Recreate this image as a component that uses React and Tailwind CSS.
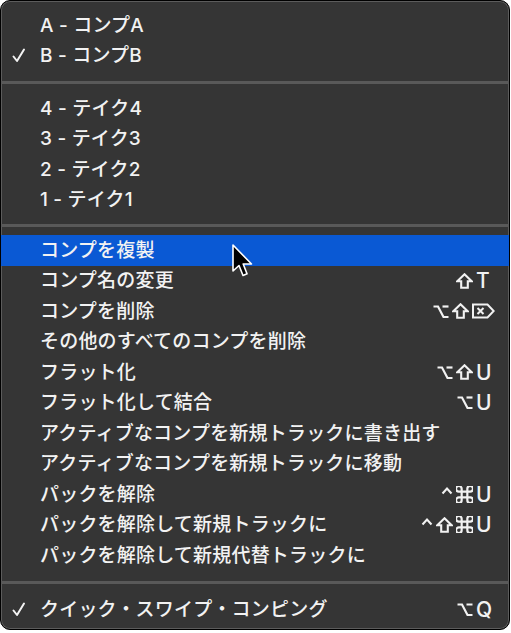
import React from 'react'

const font = { fontFamily: '"Inter", "Noto Sans CJK JP", sans-serif' }

function OptKey() {
  return (
    <svg width="16" height="15" viewBox="0 0 16 15" fill="none" stroke="currentColor" strokeWidth="2.2" strokeLinecap="butt">
      <path d="M0.5 2.5 H5 L10.5 13 H15.5" />
      <path d="M9.5 2.5 H15.5" />
    </svg>
  )
}

function ShiftKey() {
  return (
    <svg width="17" height="16" viewBox="0 0 17 16" fill="none" stroke="currentColor" strokeWidth="2.1" strokeLinejoin="miter">
      <path d="M8.5 1.3 L15.7 8.3 H11.8 V14.7 H5.2 V8.3 H1.3 Z" />
    </svg>
  )
}

function CmdKey() {
  return (
    <svg width="17" height="17" viewBox="3 3 18 18" fill="none" stroke="currentColor" strokeWidth="2.3">
      <path d="M15 6v12a3 3 0 1 0 3-3H6a3 3 0 1 0 3 3V6a3 3 0 1 0-3 3h12a3 3 0 1 0-3-3" />
    </svg>
  )
}

function CtrlKey() {
  return (
    <svg width="12" height="16" viewBox="0 0 12 16" fill="none" stroke="currentColor" strokeWidth="2.1">
      <path d="M1.5 7.5 L6 2.5 L10.5 7.5" />
    </svg>
  )
}

function DelKey() {
  return (
    <svg width="23" height="16" viewBox="0 0 23 16" fill="none" stroke="currentColor" strokeWidth="2" strokeLinejoin="miter">
      <path d="M1 1.5 H15.5 L21.7 8 L15.5 14.5 H1 Z" />
      <path d="M5.5 5 L11.5 11 M11.5 5 L5.5 11" />
    </svg>
  )
}

function Check() {
  return (
    <svg width="14" height="15" viewBox="0 0 14 15" fill="none" stroke="currentColor" strokeWidth="2" strokeLinecap="round" strokeLinejoin="round">
      <path d="M1.5 8.5 L5 13 L12 1.5" />
    </svg>
  )
}

const glyphs = { opt: OptKey, shift: ShiftKey, cmd: CmdKey, ctrl: CtrlKey }

function Shortcut({ mods = [], keyName }) {
  if (!keyName) return null
  return (
    <div className="flex items-center">
      <div className="flex items-center gap-[3px]">
        {mods.map((m, i) => {
          const Icon = glyphs[m]
          return <Icon key={i} />
        })}
      </div>
      <div className="min-w-[19px] flex justify-start ml-[3px]">
        {keyName === 'del' ? <DelKey /> : <span className="text-[21px] font-medium leading-none">{keyName}</span>}
      </div>
    </div>
  )
}

function Item({ label, checked, active, mods, keyName }) {
  return (
    <div className={'flex items-center h-[30.5px] pr-[14px] ' + (active ? 'bg-[#0a59d4]' : '')}>
      <div className="w-[39px] pl-[11px] flex items-center">{checked && <Check />}</div>
      <span className="flex-1 text-[19px] font-medium leading-none tracking-[0.2px] whitespace-nowrap">{label}</span>
      <Shortcut mods={mods} keyName={keyName} />
    </div>
  )
}

function Separator({ h }) {
  return (
    <div className={'flex items-center ' + h}>
      <div className="w-full h-[3px] bg-[#595959]" />
    </div>
  )
}

function Cursor() {
  return (
    <svg className="absolute left-[230px] top-[242px]" width="23" height="35" viewBox="-2 -2 23 35">
      <path
        d="M0 0 L0 26 L6 20.5 L10 30.5 L14 28.8 L10.2 19 L18.5 19 Z"
        fill="#000"
        stroke="#fff"
        strokeWidth="1.6"
        strokeLinejoin="round"
      />
    </svg>
  )
}

export default function App() {
  return (
    <div className="bg-white w-[511px] h-[633px]" style={font}>
      <div className="relative w-[510px] rounded-[10px] border border-black bg-[#353535] shadow-[inset_0_0_0_1px_#5c5c5c] pt-[9px] pb-[4px] text-[#f2f2f2] overflow-hidden">
        <Item label="A - コンプA" />
        <Item label="B - コンプB" checked />
        <Separator h="h-[22px]" />
        <Item label="4 - テイク4" />
        <Item label="3 - テイク3" />
        <Item label="2 - テイク2" />
        <Item label="1 - テイク1" />
        <Separator h="h-[20px]" />
        <Item label="コンプを複製" active />
        <Item label="コンプ名の変更" mods={['shift']} keyName="T" />
        <Item label="コンプを削除" mods={['opt', 'shift']} keyName="del" />
        <Item label="その他のすべてのコンプを削除" />
        <Item label="フラット化" mods={['opt', 'shift']} keyName="U" />
        <Item label="フラット化して結合" mods={['opt']} keyName="U" />
        <Item label="アクティブなコンプを新規トラックに書き出す" />
        <Item label="アクティブなコンプを新規トラックに移動" />
        <Item label="パックを解除" mods={['ctrl', 'cmd']} keyName="U" />
        <Item label="パックを解除して新規トラックに" mods={['ctrl', 'shift', 'cmd']} keyName="U" />
        <Item label="パックを解除して新規代替トラックに" />
        <Separator h="h-[24px]" />
        <Item label="クイック・スワイプ・コンピング" checked mods={['opt']} keyName="Q" />
        <Cursor />
      </div>
    </div>
  )
}
